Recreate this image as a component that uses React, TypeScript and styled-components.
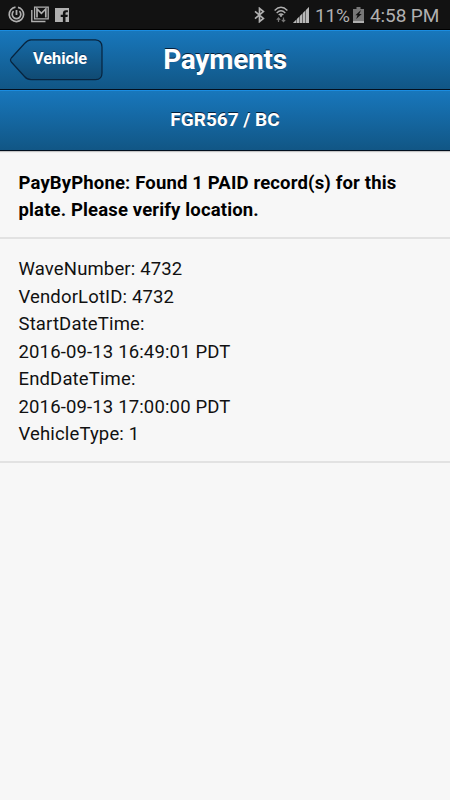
import React from "react";
import styled, { createGlobalStyle } from "styled-components";

const GlobalStyle = createGlobalStyle`
  body { margin: 0; background: #f7f7f7; font-family: Roboto, sans-serif; }
`;

const Screen = styled.div`
  width: 450px;
  height: 800px;
  display: flex;
  flex-direction: column;
  background: #f7f7f7;
  overflow: hidden;
`;

const StatusBar = styled.div`
  height: 30px;
  flex: none;
  box-sizing: border-box;
  display: flex;
  justify-content: space-between;
  padding: 0 11px 0 8px;
  background: #121212;
  border-bottom: 1px solid #000;
  color: #b0b0b0;
`;

const StatusGroup = styled.div`
  display: flex;
  align-items: center;
`;

const Glyph = styled.svg<{ $gap?: number }>`
  display: block;
  flex: none;
  margin-right: ${(p) => p.$gap ?? 0}px;
`;

const StatusText = styled.span<{ $width: number; $spacing?: number; $gap?: number }>`
  width: ${(p) => p.$width}px;
  margin-right: ${(p) => p.$gap ?? 0}px;
  font-size: 19px;
  line-height: 29px;
  padding-top: 2px;
  letter-spacing: ${(p) => p.$spacing ?? 0}px;
  white-space: nowrap;
`;

const BlueBar = styled.header`
  box-sizing: border-box;
  flex: none;
  display: grid;
  grid-template-columns: 1fr auto 1fr;
  align-items: center;
  background: linear-gradient(#1877bc, #115685);
  border-top: 1px solid #1a8ce0;
  border-bottom: 1px solid #020f1e;
  color: #fff;
`;

const NavBar = styled(BlueBar)`
  height: 60px;
  padding: 0 9px;
`;

const PlateBar = styled(BlueBar)`
  height: 61px;
  box-shadow: 0 1px 1px #c4c4c4;
`;

const BackButton = styled.button`
  display: grid;
  width: 94px;
  height: 42px;
  margin: 0;
  padding: 0;
  border: 0;
  background: none;
  color: #fff;
  font: 700 16.3px/42px Roboto, sans-serif;
  text-shadow: 0 -1px 0 #0b3a66;
  > * { grid-area: 1 / 1; }
`;

const BackLabel = styled.span`
  padding-left: 24px;
  line-height: 39px;
  text-align: left;
`;

const Title = styled.h1`
  grid-column: 2;
  margin: 0;
  font-size: 28px;
  line-height: 58px;
  letter-spacing: -0.25px;
  text-shadow: 0 -1.5px 0 #06203a;
`;

const Plate = styled.h2`
  grid-column: 2;
  margin: 0;
  font-size: 19px;
  line-height: 56px;
  padding-bottom: 2px;
  text-shadow: 0 -1px 0 #06203a;
`;

const Section = styled.section<{ $bold?: boolean }>`
  flex: none;
  box-sizing: border-box;
  height: ${(p) => (p.$bold ? 88 : 223.5)}px;
  padding: ${(p) => (p.$bold ? 18.6 : 17.2)}px 18.5px 0;
  border-bottom: 2px solid #e2e2e2;
  font-size: 18.5px;
  font-weight: ${(p) => (p.$bold ? 700 : 400)};
  line-height: ${(p) => (p.$bold ? 27.5 : 27.5)}px;
  letter-spacing: 0.15px;
  color: ${(p) => (p.$bold ? "#000" : "#111")};
`;

const Line = styled.div`
  white-space: nowrap;
`;

const RECORD = [
  "WaveNumber: 4732",
  "VendorLotID: 4732",
  "StartDateTime:",
  "2016-09-13 16:49:01 PDT",
  "EndDateTime:",
  "2016-09-13 17:00:00 PDT",
  "VehicleType: 1",
];

const PowerIcon = () => (
  <Glyph $gap={6} width="17" height="17" viewBox="0 0 17 17" fill="none" stroke="#b0b0b0">
    <path d="M7.5 1.2A7.2 7.2 0 1 0 15.6 8.5A7.2 7.2 0 0 0 10 1.4" strokeWidth="1.7" />
    <path d="M5.6 5.2A4.3 4.3 0 1 0 11.4 5.2" strokeWidth="1.7" />
    <path d="M8.5 4v5" strokeWidth="1.8" />
  </Glyph>
);

const MailIcon = () => (
  <Glyph $gap={6} width="18" height="17" viewBox="0 0 18 17" fill="none" stroke="#b0b0b0">
    <path d="M.8 4v11.5H14.5" strokeWidth="1.4" />
    <path d="M3.6 1.2h13.6v11.6H3.6z" strokeWidth="1.3" />
    <path d="M6 11.5V3l4.400 4.300L14.800 3v8.500" strokeWidth="1.7" />
  </Glyph>
);

const FacebookIcon = () => (
  <Glyph width="14" height="14" viewBox="0 0 14 14">
    <path fill="#b0b0b0" d="M0 0h14v14h-3.5V9h2l.3-2.3h-2.3V5.3c0-.8.4-1 1.1-1h1.3V2.200h-2c-2 0-3 1.1-3 2.800v1.7H5.7V9h2.2v5H0z" />
  </Glyph>
);

const BluetoothIcon = () => (
  <Glyph $gap={9} width="11" height="16" viewBox="0 0 11 16" fill="none" stroke="#b0b0b0" strokeWidth="1.7">
    <path d="M1 4.3l8.4 7.1L5.5 14.6V1.4l3.9 3.2L1 11.7" />
  </Glyph>
);

const WifiIcon = () => (
  <Glyph $gap={5} width="14" height="17" viewBox="0 0 14 17" fill="none" stroke="#b0b0b0" strokeWidth="1.4">
    <path d="M.6 4.4Q7-1.7 13.4 4.4M2.7 6.9Q7 2.8 11.3 6.9M4.7 9Q7 6.8 9.3 9" />
    <path d="M7 8.7v2" strokeWidth="1.8" />
    <path d="M4.5 16v-4M2.8 13.8l1.7-1.9 1.7 1.9M9.5 11.5v4M7.8 13.8l1.7 1.9 1.7-1.9" stroke="#777" strokeWidth="1.2" />
  </Glyph>
);

const SignalIcon = () => (
  <Glyph $gap={6} width="16" height="16" viewBox="0 0 16 16">
    <path fill="#666" d="M0 16L16 0v16z" />
    <path fill="#b8b8b8" d="M0 16l3-3v3H0zM4 12l2-2v6H4zM7 9l2-2v9H7zM10 6l2-2v12h-2zM13 3l3-3v16h-3z" />
  </Glyph>
);

const BatteryIcon = () => (
  <Glyph $gap={6} width="11" height="16" viewBox="0 0 11 16">
    <path fill="#777" d="M3.5 0h4v2H11v14H0V2h3.5z" />
    <path fill="#b0b0b0" d="M0 14h11v2H0z" />
    <path fill="#121212" d="M8 3L2.4 8.2h2.1L3.2 12l5.5-5H6.2z" />
  </Glyph>
);

const BackShape = () => (
  <svg width="94" height="42" viewBox="0 0 94 42">
    <defs>
      <linearGradient id="back-fill" x1="0" y1="0" x2="0" y2="1">
        <stop offset="0" stopColor="#166aa6" />
        <stop offset="1" stopColor="#104a72" />
      </linearGradient>
    </defs>
    <path
      d="M22 .8H86.5Q93 1.3 93 8V34Q93 40.5 86.5 40.7H22Q18 40.5 15.5 37.5L2.3 23Q.7 21 2.3 19L15.5 4.5Q18.5 1 22 .8Z"
      fill="url(#back-fill)"
      stroke="#08243e"
      strokeWidth="1.2"
    />
  </svg>
);

export default function App() {
  return (
    <Screen>
      <GlobalStyle />
      <StatusBar>
        <StatusGroup>
          <PowerIcon />
          <MailIcon />
          <FacebookIcon />
        </StatusGroup>
        <StatusGroup>
          <BluetoothIcon />
          <WifiIcon />
          <SignalIcon />
          <StatusText $width={35} $spacing={-0.2} $gap={3}>11%</StatusText>
          <BatteryIcon />
          <StatusText $width={69} $spacing={-0.1}>4:58 PM</StatusText>
        </StatusGroup>
      </StatusBar>
      <NavBar>
        <BackButton>
          <BackShape />
          <BackLabel>Vehicle</BackLabel>
        </BackButton>
        <Title>Payments</Title>
      </NavBar>
      <PlateBar>
        <Plate>FGR567 / BC</Plate>
      </PlateBar>
      <Section $bold>
        <Line>PayByPhone: Found 1 PAID record(s) for this</Line>
        <Line>plate. Please verify location.</Line>
      </Section>
      <Section>
        {RECORD.map((text) => (
          <Line key={text}>{text}</Line>
        ))}
      </Section>
    </Screen>
  );
}
